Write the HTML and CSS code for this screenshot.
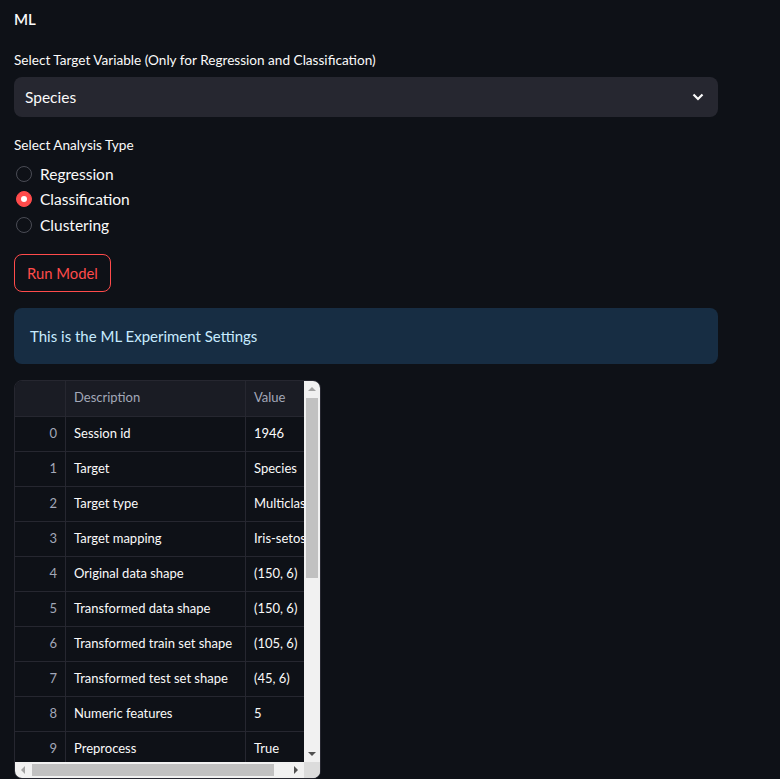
FILE: index.html
```html
<!DOCTYPE html>
<html>
<head>
<meta charset="utf-8">
<link rel="stylesheet" href="styles.css">
</head>
<body>
<main class="page">
  <div class="title">ML</div>

  <div class="field">
    <div class="label">Select Target Variable (Only for Regression and Classification)</div>
    <div class="select">
      <span>Species</span>
      <svg class="chev" width="12" height="8" viewBox="0 0 12 8"><path d="M1.5 1.5 L6 6 L10.5 1.5" fill="none" stroke="#fafafa" stroke-width="2.2"/></svg>
    </div>
  </div>

  <div class="field radios-field">
    <div class="label">Select Analysis Type</div>
    <div class="radios">
      <div class="radio"><span class="dot"></span><span>Regression</span></div>
      <div class="radio checked"><span class="dot"></span><span>Classification</span></div>
      <div class="radio"><span class="dot"></span><span>Clustering</span></div>
    </div>
  </div>

  <div class="btn-row"><button class="btn">Run Model</button></div>

  <div class="info">This is the ML Experiment Settings</div>

  <div class="table-wrap">
    <div class="table-body">
      <div class="grid">
        <div class="row head"><div class="c idx"></div><div class="c desc">Description</div><div class="c val">Value</div></div>
        <div class="row"><div class="c idx">0</div><div class="c desc">Session id</div><div class="c val">1946</div></div>
        <div class="row"><div class="c idx">1</div><div class="c desc">Target</div><div class="c val">Species</div></div>
        <div class="row"><div class="c idx">2</div><div class="c desc">Target type</div><div class="c val">Multiclass</div></div>
        <div class="row"><div class="c idx">3</div><div class="c desc">Target mapping</div><div class="c val">Iris-setosa: 0</div></div>
        <div class="row"><div class="c idx">4</div><div class="c desc">Original data shape</div><div class="c val">(150, 6)</div></div>
        <div class="row"><div class="c idx">5</div><div class="c desc">Transformed data shape</div><div class="c val">(150, 6)</div></div>
        <div class="row"><div class="c idx">6</div><div class="c desc">Transformed train set shape</div><div class="c val">(105, 6)</div></div>
        <div class="row"><div class="c idx">7</div><div class="c desc">Transformed test set shape</div><div class="c val">(45, 6)</div></div>
        <div class="row"><div class="c idx">8</div><div class="c desc">Numeric features</div><div class="c val">5</div></div>
        <div class="row"><div class="c idx">9</div><div class="c desc">Preprocess</div><div class="c val">True</div></div>
      </div>
      <div class="vscroll">
        <div class="arrow up"></div>
        <div class="vtrack"><div class="vthumb"></div></div>
        <div class="arrow down"></div>
      </div>
    </div>
    <div class="hscroll">
      <div class="arrow left"></div>
      <div class="htrack"><div class="hthumb"></div></div>
      <div class="arrow right"></div>
      <div class="corner"></div>
    </div>
  </div>
</main>
</body>
</html>
```

FILE: styles.css
```css
* { box-sizing: border-box; }
html, body { margin: 0; padding: 0; background: #0e1117; }
body {
  color: #fafafa;
  font-family: "Lato", "Noto Sans", sans-serif;
  width: 780px;
  height: 779px;
  overflow: hidden;
}
.page {
  padding: 9px 62px 0 14px;
  display: flex;
  flex-direction: column;
}
.title { font-size: 15px; font-weight: 600; height: 20px; line-height: 20px; }
.field { margin-top: 22px; }
.label { font-size: 13.6px; line-height: 18px; height: 18px; }
.select {
  margin-top: 8px;
  height: 40px;
  background: #262730;
  border-radius: 8px;
  display: flex;
  align-items: center;
  justify-content: space-between;
  padding: 0 14px 0 11px;
  font-size: 15.5px;
}
.chev { display: block; }
.radios-field { margin-top: 19px; }
.radios { display: flex; flex-direction: column; margin-top: 7px; }
.radio { display: flex; align-items: center; height: 25.5px; font-size: 15.5px; }
.dot {
  width: 16px; height: 16px; border-radius: 50%;
  border: 1px solid #4a4c55;
  margin: 0 8px 0 2px;
  position: relative;
  flex: none;
}
.radio.checked .dot { background: #ff4b4b; border-color: #ff4b4b; }
.radio.checked .dot::after {
  content: ""; position: absolute; left: 4px; top: 4px; width: 6px; height: 6px;
  border-radius: 50%; background: #fff;
}
.btn-row { margin-top: 16px; }
.btn {
  height: 38px;
  padding: 0 12px;
  background: #0e1117;
  border: 1px solid #ff4b4b;
  border-radius: 8px;
  color: #ff4b4b;
  font-family: inherit;
  font-size: 14.8px;
}
.info {
  margin-top: 16px;
  height: 56px;
  background: #172d43;
  border-radius: 8px;
  color: #c7ebff;
  font-size: 15px;
  display: flex;
  align-items: center;
  padding: 0 16px;
}
.table-wrap {
  margin-top: 16px;
  width: 307px;
  border: 1px solid #262730;
  border-radius: 8px;
  overflow: hidden;
  display: flex;
  flex-direction: column;
}
.table-body { display: flex; height: 381px; overflow: hidden; }
.grid { width: 290px; overflow: hidden; }
.row { display: flex; height: 35px; border-bottom: 1px solid #262730; font-size: 13px; }
.row.head { background: #1a1c24; color: #a3a8b8; height: 36px; }
.c { display: flex; align-items: center; white-space: nowrap; overflow: hidden; flex: none; padding-bottom: 2px; }
.idx { width: 51px; justify-content: flex-end; padding-right: 8px; color: #a3a8b8; border-right: 1px solid #262730; }
.desc { width: 180px; padding-left: 8px; border-right: 1px solid #262730; }
.val { width: 59px; padding-left: 8px; }
.vscroll { width: 16px; background: #f1f1f1; display: flex; flex-direction: column; }
.vtrack { flex: 1; padding: 0 2px; }
.vthumb { margin-top: 0; height: 180px; background: #c1c1c1; }
.arrow { width: 16px; height: 17px; flex: none; position: relative; }
.arrow::after { content: ""; position: absolute; width: 0; height: 0; }
.arrow.up::after { left: 4px; top: 6px; border-left: 4px solid transparent; border-right: 4px solid transparent; border-bottom: 4px solid #a3a3a3; }
.arrow.down::after { left: 4px; top: 7px; border-left: 4px solid transparent; border-right: 4px solid transparent; border-top: 4px solid #505050; }
.hscroll { display: flex; height: 16px; background: #f1f1f1; }
.arrow.left { width: 17px; height: 16px; }
.arrow.right { width: 17px; height: 16px; }
.arrow.left::after { left: 6px; top: 4px; border-top: 4px solid transparent; border-bottom: 4px solid transparent; border-right: 4px solid #a3a3a3; }
.arrow.right::after { left: 7px; top: 4px; border-top: 4px solid transparent; border-bottom: 4px solid transparent; border-left: 4px solid #505050; }
.htrack { flex: 1; padding: 2px 0; }
.hthumb { width: 242px; height: 100%; background: #c1c1c1; }
.corner { width: 16px; background: #dcdcdc; }
```
